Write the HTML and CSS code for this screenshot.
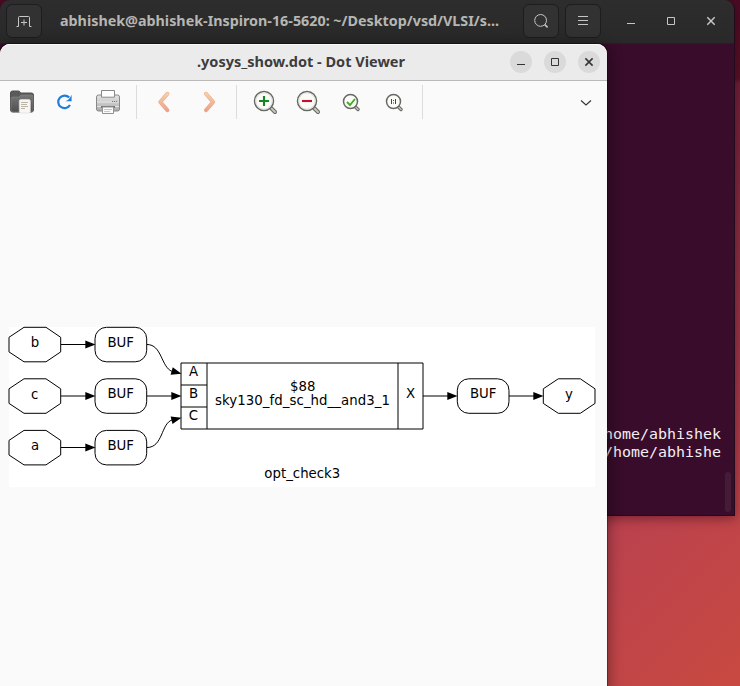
FILE: index.html
```
<!DOCTYPE html>
<html lang="en">
<head>
<meta charset="utf-8">
<title>Dot Viewer</title>
<link rel="stylesheet" href="styles.css">
</head>
<body>
<main class="desktop">
  <section class="terminal">
    <header class="terminal-header">
      <button class="dark-button" aria-label="New tab"><svg width="16" height="16" viewBox="0 0 16 16"><path class="light-line" d="M.5 13.5h2v-9q0-1 1-1h9q1 0 1 1v9h2M8 6.5v6M5 9.5h6"/></svg></button>
      <h1 class="terminal-title"><svg width="442" height="24"><text x="0" y="17" textLength="439" lengthAdjust="spacingAndGlyphs">abhishek@abhishek-Inspiron-16-5620: ~/Desktop/vsd/VLSI/s...</text></svg></h1>
      <button class="dark-button search" aria-label="Search"><svg width="16" height="16" viewBox="0 0 16 16"><circle class="light-line" cx="7.6" cy="7.4" r="5.9"/><path class="light-line wide" d="M11.8 11.6l2.8 2.8"/></svg></button>
      <button class="dark-button menu" aria-label="Menu"><svg width="16" height="16" viewBox="0 0 16 16"><path class="light-line" d="M3 3.5h10M3 7.5h10M3 11.5h10"/></svg></button>
      <div class="terminal-controls">
        <svg width="16" height="16" viewBox="0 0 16 16"><path class="light-line" d="M4 10.5h8"/></svg>
        <svg width="16" height="16" viewBox="0 0 16 16"><path class="light-line" d="M4.5 4.5h7v7h-7z"/></svg>
        <svg width="16" height="16" viewBox="0 0 16 16"><path class="light-line wide" d="M4.3 4.3l7.4 7.4M11.7 4.3l-7.4 7.4"/></svg>
      </div>
    </header>
    <div class="terminal-output">
      <div class="terminal-line">home/abhishek</div>
      <div class="terminal-line">/home/abhishe</div>
      <span class="scrollbar"></span>
    </div>
  </section>

  <section class="viewer">
    <header class="viewer-header">
      <h2 class="viewer-title"><svg width="210" height="24"><text x="0" y="17" textLength="208" lengthAdjust="spacingAndGlyphs">.yosys_show.dot - Dot Viewer</text></svg></h2>
      <div class="viewer-controls">
        <button class="round" aria-label="Minimize"><svg width="16" height="16"><path d="M4 10.5h8"/></svg></button>
        <button class="round" aria-label="Maximize"><svg width="16" height="16"><path d="M4.5 4.5h7v7h-7z"/></svg></button>
        <button class="round" aria-label="Close"><svg width="16" height="16"><path class="wide" d="M4.4 4.4l7.2 7.2M11.6 4.4l-7.2 7.2"/></svg></button>
      </div>
    </header>
    <nav class="toolbar">
      <div class="tools files">
        <svg width="24" height="24" viewBox="0 0 24 24">
          <defs>
            <linearGradient id="folder" x2="0" y2="1"><stop stop-color="#777"/><stop offset="1" stop-color="#4e4e4e"/></linearGradient>
            <linearGradient id="metal" x2="0" y2="1"><stop stop-color="#e5e5e5"/><stop offset=".5" stop-color="#c9c9c9"/><stop offset="1" stop-color="#aaa"/></linearGradient>
            <linearGradient id="arrow" gradientUnits="userSpaceOnUse" x1="0" y1="3" x2="0" y2="21"><stop stop-color="#f2d2ad"/><stop offset="1" stop-color="#efa087"/></linearGradient>
          </defs>
          <path d="M.5 3Q.5 1 2.5 1h6q1 0 1.5 1l.5 1h11q2 0 2 2v15q0 2-2 2h-19q-2 0-2-2z" fill="#5a5a5a" stroke="#505050"/>
          <path d="M1 9q0-2 2-2h6l2-2h11q1 0 1 1v14q0 2-2 2H3q-2 0-2-2z" fill="url(#folder)" stroke="#858585" stroke-width=".6"/>
          <rect x="9.3" y="9.5" width="11" height="13.5" rx="1.5" fill="#f7f6f4" stroke="#deddda" stroke-width=".7"/>
          <path d="M11 12.5h7M11 14.5h6M11 16.5h7M11 18.5h4" stroke="#bbb3a5"/>
        </svg>
        <svg width="24" height="24" viewBox="0 0 24 24"><path d="M17.2 7.6A6.3 6.3 0 1 0 18 15" fill="none" stroke="#1d7fda" stroke-width="2.2"/><path d="M19.6 4.8v6.4h-6.4q4-.7 6.4-6.4z" fill="#1d7fda"/></svg>
        <svg width="24" height="24" viewBox="0 0 24 24">
          <path d="M.5 7q0-2 2-2h19q2 0 2 2v12q0 2-2 2h-19q-2 0-2-2z" fill="url(#metal)" stroke="#888"/>
          <path d="M1 12h22M1 16.5h22" stroke="#eee" stroke-width=".8"/>
          <path d="M5.5.5h13v6.7h-13z" fill="#fff" stroke="#888"/>
          <path d="M5 17h14" stroke="#777" stroke-width="2"/>
          <path d="M6.5 17h11v6.5h-11z" fill="#fafafa" stroke="#929292"/>
          <path d="M8 19.5h8M8 21.5h6" stroke="#c8c8c8"/>
          <path d="M16 11.5h1.2M18 11.5h1.2" stroke="#ef4545"/><path d="M20 11.5h1.2" stroke="#35ad4f"/>
        </svg>
      </div>
      <i class="separator"></i>
      <div class="tools history">
        <svg width="24" height="24" viewBox="0 0 24 24"><path d="M16.4 3.8L9.3 12l7.1 8.2" class="arrow-edge"/><path d="M16.4 3.8L9.3 12l7.1 8.2" class="arrow-core"/></svg>
        <svg width="24" height="24" viewBox="0 0 24 24"><path d="M6 3.8l7.1 8.2L6 20.2" class="arrow-edge"/><path d="M6 3.8l7.1 8.2L6 20.2" class="arrow-core"/></svg>
      </div>
      <i class="separator"></i>
      <div class="tools zooms">
        <svg width="24" height="24" viewBox="0 0 24 24"><path class="handle" d="M18 18l4 4"/><path class="handle-core" d="M18 18l4 4"/><circle class="lens" cx="11" cy="11" r="9.5"/><circle class="shine" cx="11" cy="11" r="8.2"/><path d="M6 11h10M11 6v10" stroke="#168526" stroke-width="2.1"/></svg>
        <svg width="24" height="24" viewBox="0 0 24 24"><path class="handle" d="M18 18l4 4"/><path class="handle-core" d="M18 18l4 4"/><circle class="lens" cx="11" cy="11" r="9.5"/><circle class="shine" cx="11" cy="11" r="8.2"/><path d="M6 11h10" stroke="#c51030" stroke-width="2.1"/></svg>
        <svg width="24" height="24" viewBox="0 0 24 24"><path class="handle small" d="M16 16.5l3 3"/><path class="handle-core small" d="M16 16.5l3 3"/><circle class="lens" cx="11.5" cy="11.5" r="7"/><path d="M8 12l3 3 5-6" fill="none" stroke="#45ad22" stroke-width="1.9"/></svg>
        <svg width="24" height="24" viewBox="0 0 24 24"><path class="handle small" d="M16 16.5l3 3"/><path class="handle-core small" d="M16 16.5l3 3"/><circle class="lens" cx="11.5" cy="11.5" r="7"/><path d="M9.5 9v5M13.5 9v5M11 10.5h1M11 13h1" stroke="#444"/></svg>
      </div>
      <i class="separator"></i>
      <svg class="chevron" width="16" height="16"><path d="M3 5.5l5 4.5 5-4.5"/></svg>
    </nav>
    <div class="canvas">
      <svg class="graph" width="587" height="160" viewBox="9 327 587 160">
        <defs>
          <path id="oct" d="M15 0h22l14.7 10v14.6L37 34.5H15L0 24.6V10z"/>
          <rect id="buf" width="51.7" height="34.5" rx="11.5"/>
          <path id="head" d="M0 0l-10.2-3.9v7.8z"/>
        </defs>
        <rect class="paper" x="9" y="327" width="586" height="160"/>
        <g class="shape">
          <use href="#oct" x="9" y="327.3"/><use href="#oct" x="9" y="378.8"/><use href="#oct" x="9" y="430.4"/><use href="#oct" x="543.3" y="378.8"/>
          <use href="#buf" x="95" y="327.3"/><use href="#buf" x="95" y="378.8"/><use href="#buf" x="95" y="430.4"/><use href="#buf" x="457.3" y="378.8"/>
          <path d="M181 363h242v66H181zM207 363v66M398 363v66M181 385h26M181 407h26"/>
          <path d="M61 344.5h25M61 396h25M61 447.5h25M147 396h25M423 396h25M509 396h25M147 344.5C162 344.5 161 367 172 371.4M147 447.5C163 447.5 161 423.5 172 420"/>
        </g>
        <g class="heads">
          <use href="#head" x="95.5" y="344.5"/><use href="#head" x="95.5" y="396"/><use href="#head" x="95.5" y="447.5"/><use href="#head" x="181.5" y="396"/><use href="#head" x="457.5" y="396"/><use href="#head" x="543.5" y="396"/>
          <use href="#head" transform="translate(181.5 373.8) rotate(16)"/><use href="#head" transform="translate(181.5 417.8) rotate(-14)"/>
        </g>
        <g class="labels">
          <text x="35" y="347">b</text><text x="34.7" y="398.5">c</text><text x="35" y="450">a</text><text x="569" y="398.5">y</text>
          <text x="120.7" y="347">BUF</text><text x="120.7" y="398">BUF</text><text x="120.7" y="450">BUF</text><text x="483.2" y="398">BUF</text>
          <text x="193.5" y="376">A</text><text x="193.5" y="398">B</text><text x="193.5" y="420">C</text><text x="410.5" y="398">X</text>
          <text x="302.8" y="391">$88</text><text x="302.5" y="405" textLength="175">sky130_fd_sc_hd__and3_1</text>
          <text x="302.3" y="478" textLength="76">opt_check3</text>
        </g>
      </svg>
    </div>
  </section>
</main>
</body>
</html>
```
FILE: styles.css
```
* { box-sizing: border-box; }
body { margin: 0; overflow: hidden; font-family: "Noto Sans", sans-serif; }
button { padding: 0; border: 0; }
h1, h2 { margin: 0; font-size: 14px; }
svg { display: block; flex: none; overflow: visible; }

.desktop {
  position: relative;
  width: 740px;
  height: 686px;
  overflow: hidden;
  background:
    linear-gradient(180deg, #4a0b24 0, #561126 78px, #702039 84px, #8f3044 260px, transparent 500px),
    linear-gradient(135deg, #a8374f 50%, #b94150 78%, #c84940 100%);
}
.terminal {
  position: absolute;
  top: 0;
  left: 0;
  width: 735px;
  height: 516px;
  border-right: 1px solid #230b1b;
  border-bottom: 1px solid #230b1b;
  border-radius: 10px 10px 0 0;
  background: #380c2a;
  box-shadow: 0 2px 12px rgba(40, 0, 15, .5);
  overflow: hidden;
}
.terminal-header {
  display: flex;
  height: 44px;
  padding: 4px 15px 0 6px;
  border-bottom: 1px solid #222;
  background: linear-gradient(#2d2d2d, #292929);
}
.dark-button {
  display: grid;
  place-items: center;
  width: 36px;
  height: 34px;
  border: 1px solid #1d1d1d;
  border-radius: 6px;
  background: #323232;
  flex: none;
}
.dark-button.menu { margin-left: 6px; }
.terminal-title { width: 442px; margin: 5px 21px 0 18px; }
.terminal-title text { fill: #b6b6b3; font-size: 14.5px; font-weight: 700; }
.light-line { fill: none; stroke: #c6c6c4; stroke-width: 1; }
.light-line.wide { stroke-width: 1.5; }
.terminal-controls { display: flex; gap: 24px; margin: 9px 0 0 22px; }
.terminal-output {
  display: flex;
  flex-direction: column;
  align-items: flex-end;
  height: 471px;
  padding: 381px 13px 0 0;
  position: relative;
}
.terminal-line {
  height: 18px;
  color: #f4eff2;
  font: 14.95px/18px "DejaVu Sans Mono", monospace;
}
.scrollbar {
  position: absolute;
  right: 3px;
  bottom: 3px;
  width: 6px;
  height: 40px;
  border-radius: 3px;
  background: #451c38;
}
.viewer {
  position: absolute;
  left: 0;
  top: 44px;
  width: 607px;
  height: 652px;
  border-radius: 10px 10px 0 0;
  background: #fafafa;
  box-shadow: 0 0 0 1px rgba(0, 0, 0, .3), 0 2px 15px rgba(0, 0, 0, .48);
}
.viewer-header {
  display: flex;
  justify-content: flex-end;
  height: 37px;
  padding: 6px 7px 0 0;
  border-bottom: 1px solid #b9b9b9;
  border-radius: 10px 10px 0 0;
  background: #ebebeb;
  box-shadow: inset 0 1px #fafafa;
}
.viewer-title { margin-right: 103px; }
.viewer-title text { fill: #3d3d3d; font-size: 14.5px; font-weight: 700; }
.viewer-controls { display: flex; gap: 12px; padding-top: 1px; }
.round {
  display: grid;
  place-items: center;
  width: 22px;
  height: 22px;
  border-radius: 50%;
  background: #dadada;
}
.round path, .chevron path { fill: none; stroke: #333; stroke-width: 1; }
.round .wide { stroke-width: 1.5; }
.toolbar { display: flex; height: 42px; padding: 4px 13px 0 10px; }
.tools { display: flex; padding-top: 5px; }
.files { gap: 19px; width: 126px; }
.files svg:nth-child(2) { margin: 0 1px 0 -1px; }
.history { gap: 25px; width: 99px; padding-left: 14px; }
.zooms { gap: 19px; width: 185px; padding-left: 16px; }
.separator { width: 1px; height: 34px; background: #dcdcdc; }
.chevron { margin: 10px 0 0 auto; }
.chevron path { stroke-width: 1.1; }
.arrow-edge, .arrow-core { fill: none; stroke-linecap: round; stroke-linejoin: round; }
.arrow-edge { stroke: #e8a98b; stroke-width: 4; }
.arrow-core { stroke: url(#arrow); stroke-width: 3; }
.lens { fill: #fbfbf8; stroke: #666963; stroke-width: 1.5; }
.shine { fill: none; stroke: #ddded6; stroke-width: 1; }
.handle { stroke: #666963; stroke-width: 4; stroke-linecap: round; }
.handle-core { stroke: #c7c6b9; stroke-width: 2; stroke-linecap: round; }
.handle.small { stroke-width: 3.4; }
.handle-core.small { stroke-width: 1.4; }
.canvas { padding: 204px 0 0 9px; }
.paper { fill: #fff; }
.shape { fill: none; stroke: #000; stroke-width: 1; }
.heads { fill: #000; }
.labels { fill: #000; font: 13.3px "DejaVu Sans", sans-serif; text-anchor: middle; }
```
